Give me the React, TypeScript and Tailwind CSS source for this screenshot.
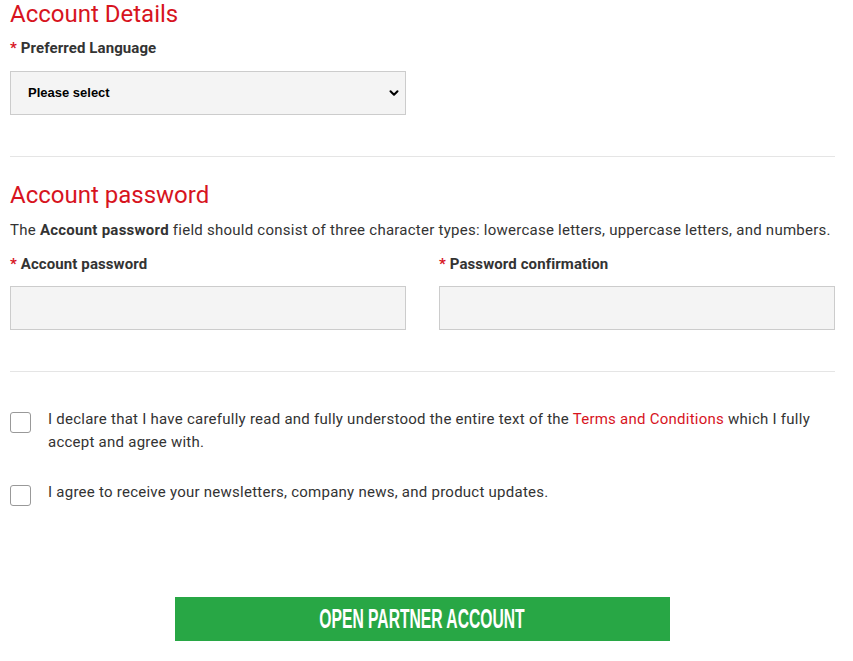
import { ChevronDown } from 'lucide-react'

function Req({ children }: { children: React.ReactNode }) {
  return (
    <label className="block text-[15px] font-bold leading-[20px] tracking-[0.1px] text-[#333]">
      <span className="text-[#d7141e]">*</span> {children}
    </label>
  )
}

function Check({ children }: { children: React.ReactNode }) {
  return (
    <div className="flex items-start gap-[17px]">
      <span className="mt-[4px] block h-[21px] w-[21px] shrink-0 rounded-[3px] border border-[#999] bg-white" />
      <p className="text-[15px] leading-[23px] tracking-[0.25px] text-[#333]">{children}</p>
    </div>
  )
}

export default function App() {
  return (
    <div
      className="w-[853px] h-[661px] overflow-hidden bg-white px-[10px]"
      style={{ fontFamily: 'Roboto, "Liberation Sans", sans-serif' }}
    >
      <div className="w-[825px]">
        {/* Account details */}
        <h2 className="text-[24px] leading-[28px] text-[#d7141e]">Account Details</h2>
        <div className="mt-[10px]">
          <Req>Preferred Language</Req>
        </div>
        <div className="relative mt-[13px] w-[396px]">
          <select
            className="h-[44px] w-full appearance-none border border-[#cccccc] bg-[#f4f4f4] pl-[17px] text-[13px] font-bold text-black outline-none"
            style={{ fontFamily: '"Liberation Sans", Arial, sans-serif' }}
            defaultValue=""
          >
            <option value="">Please select</option>
          </select>
          <ChevronDown className="pointer-events-none absolute right-[5px] top-[15px] h-[14px] w-[14px] text-black" strokeWidth={3.5} />
        </div>

        <div className="mt-[41px] border-t border-[#e5e5e5]" />

        {/* Account password */}
        <h2 className="mt-[24px] text-[24px] leading-[28px] text-[#d7141e]">Account password</h2>
        <p className="mt-[10px] text-[15px] leading-[22px] tracking-[0.25px] text-[#333]">
          The <b>Account password</b> field should consist of three character types: lowercase letters, uppercase letters, and numbers.
        </p>
        <div className="mt-[13px] grid grid-cols-2 gap-x-[33px]">
          <div>
            <Req>Account password</Req>
            <input type="password" className="mt-[12px] block h-[44px] w-full border border-[#cccccc] bg-[#f4f4f4] outline-none" />
          </div>
          <div>
            <Req>Password confirmation</Req>
            <input type="password" className="mt-[12px] block h-[44px] w-full border border-[#cccccc] bg-[#f4f4f4] outline-none" />
          </div>
        </div>

        <div className="mt-[41px] border-t border-[#e5e5e5]" />

        {/* Consents */}
        <div className="mt-[36px] flex flex-col gap-[27px]">
          <Check>
            I declare that I have carefully read and fully understood the entire text of the{' '}
            <a className="text-[#d7141e]">Terms and Conditions</a> which I fully accept and agree with.
          </Check>
          <Check>I agree to receive your newsletters, company news, and product updates.</Check>
        </div>

        <div className="mt-[91px] flex justify-center">
          <button className="flex h-[44px] w-[495px] items-center justify-center overflow-hidden bg-[#28a745] text-white">
            <span
              className="inline-block scale-x-[0.58] whitespace-nowrap text-[27px] font-bold uppercase leading-none"
              style={{ fontFamily: '"Liberation Sans", Arial, sans-serif' }}
            >
              Open partner account
            </span>
          </button>
        </div>
      </div>
    </div>
  )
}
